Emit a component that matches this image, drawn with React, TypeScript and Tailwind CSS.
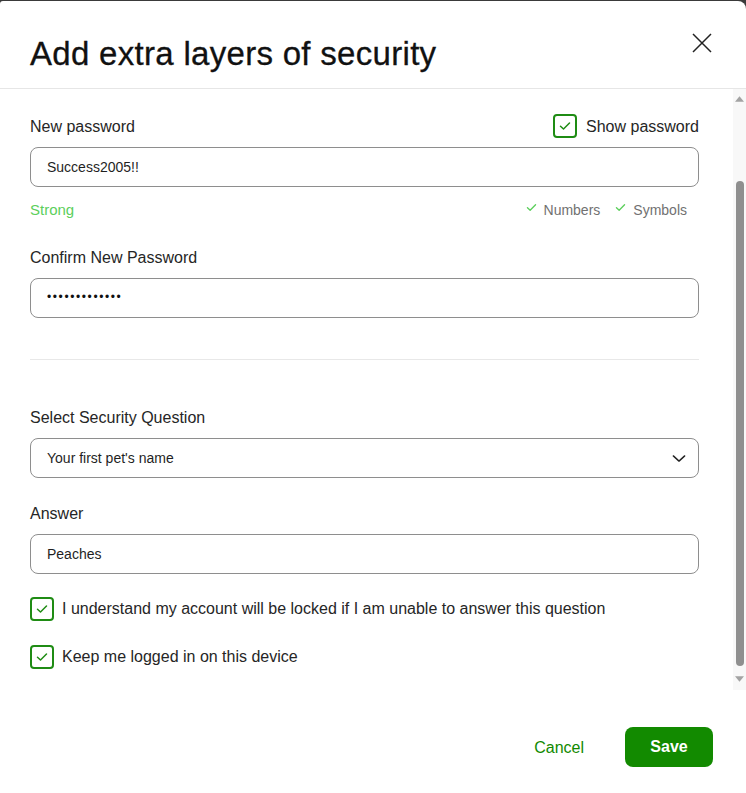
import React from "react";

const GREEN = "#128a00";

function Check({ className = "" }: { className?: string }) {
  return (
    <svg viewBox="0 0 12 10" className={className} fill="none">
      <path d="M1.5 5.2 L4.5 8 L10.5 2" stroke="currentColor" strokeWidth="1.5" strokeLinecap="round" strokeLinejoin="round" />
    </svg>
  );
}

function Box() {
  return (
    <div className="w-[24px] h-[24px] shrink-0 rounded-[4px] border-2 border-[#1f8c14] flex items-center justify-center text-[#1f8c14]">
      <Check className="w-[12px] h-[10px]" />
    </div>
  );
}

function Field({ children }: { children: React.ReactNode }) {
  return (
    <div className="h-[40px] rounded-[8px] border border-[#8e8e8e] flex items-center px-[16px] text-[14px] text-[#1f1f1f]">
      {children}
    </div>
  );
}

export default function App() {
  return (
    <div className="h-[793px] w-[746px] bg-[#3a3a3a] pt-[1px]" style={{ fontFamily: '"Liberation Sans", Arial, sans-serif' }}>
      <div className="h-full bg-white rounded-tl-[3px] rounded-tr-[8px] flex flex-col overflow-hidden">
        <div className="h-[88px] shrink-0 border-b border-[#e6e6e6] flex items-center justify-between pl-[30px] pr-[34px]">
          <h1 className="text-[33px] leading-none text-[#111] tracking-[0.3px] mt-[17px]" style={{ WebkitTextStroke: "0.3px #111" }}>Add extra layers of security</h1>
          <svg viewBox="0 0 20 20" className="w-[20px] h-[20px] mt-[-4px]" fill="none">
            <path d="M1 1 L19 19 M19 1 L1 19" stroke="#222" strokeWidth="1.5" />
          </svg>
        </div>
        <div className="h-[601px] shrink-0 flex">
          <div className="flex-1 pl-[30px] pr-[34px] text-[16px] text-[#262626]">
            <div className="mt-[25px] h-[24px] flex items-center justify-between">
              <span className="mt-[2px]">New password</span>
              <div className="flex items-center gap-[9px]">
                <Box />
                <span className="mt-[2px]">Show password</span>
              </div>
            </div>
            <div className="mt-[9px]">
              <Field>Success2005!!</Field>
            </div>
            <div className="mt-[13px] h-[20px] flex items-center justify-between pr-[12px]">
              <span className="text-[15px] text-[#5ccf5c]">Strong</span>
              <div className="flex items-center text-[14px] text-[#717171]">
                <Check className="w-[11px] h-[9px] text-[#5ccf5c] mr-[7px] mt-[-6px]" />
                <span>Numbers</span>
                <Check className="w-[11px] h-[9px] text-[#5ccf5c] ml-[15px] mr-[7px] mt-[-6px]" />
                <span>Symbols</span>
              </div>
            </div>
            <div className="mt-[28px] h-[20px] flex items-center">Confirm New Password</div>
            <div className="mt-[10px]">
              <Field>
                <span className="tracking-[1.6px] text-[12px] mt-[-3px] text-[#111]">•••••••••••••</span>
              </Field>
            </div>
            <div className="mt-[41px] border-t border-[#e8e8e8]" />
            <div className="mt-[48px] h-[20px] flex items-center">Select Security Question</div>
            <div className="mt-[10px]">
              <div className="h-[40px] rounded-[8px] border border-[#8e8e8e] flex items-center justify-between pl-[16px] pr-[12px] text-[14px] text-[#1f1f1f]">
                <span>Your first pet's name</span>
                <svg viewBox="0 0 16 10" className="w-[14px] h-[9px]" fill="none">
                  <path d="M1.5 2 L8 8 L14.5 2" stroke="#222" strokeWidth="1.6" strokeLinecap="round" strokeLinejoin="round" />
                </svg>
              </div>
            </div>
            <div className="mt-[26px] h-[20px] flex items-center">Answer</div>
            <div className="mt-[10px]">
              <Field>Peaches</Field>
            </div>
            <div className="mt-[23px] h-[24px] flex items-center gap-[8px]">
              <Box />
              <span>I understand my account will be locked if I am unable to answer this question</span>
            </div>
            <div className="mt-[24px] h-[24px] flex items-center gap-[8px]">
              <Box />
              <span>Keep me logged in on this device</span>
            </div>
          </div>
          <div className="w-[13px] shrink-0 bg-[#f8f8f8] flex flex-col items-center">
            <svg viewBox="0 0 10 6" className="w-[9px] h-[6px] mt-[7px]">
              <path d="M5 0 L10 6 L0 6 Z" fill="#a3a3a3" />
            </svg>
            <div className="mt-[79px] w-[8px] h-[485px] rounded-[4px] bg-[#8f8f8f]" />
            <svg viewBox="0 0 10 6" className="w-[9px] h-[6px] mt-[10px]">
              <path d="M0 0 L10 0 L5 6 Z" fill="#a3a3a3" />
            </svg>
          </div>
        </div>
        <div className="flex-1 flex items-start justify-end pr-[33px] pt-[37px] gap-[41px]">
          <span className="text-[16px] mt-[9px]" style={{ color: GREEN }}>Cancel</span>
          <button className="w-[88px] h-[40px] rounded-[8px] text-white text-[16px] font-bold" style={{ backgroundColor: GREEN }}>Save</button>
        </div>
      </div>
    </div>
  );
}
